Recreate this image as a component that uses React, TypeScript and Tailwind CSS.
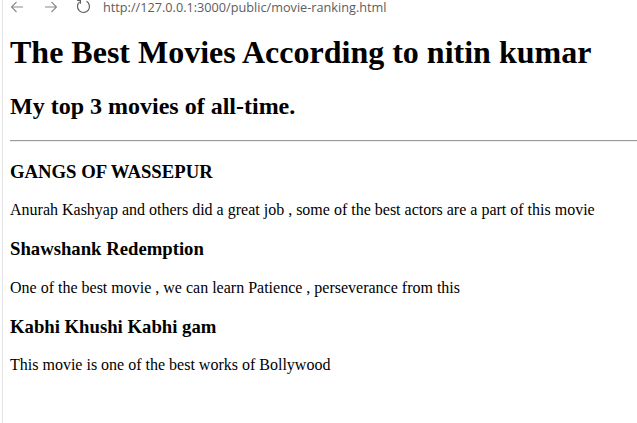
import React from "react";

const movies = [
  {
    title: "GANGS OF WASSEPUR",
    note: "Anurah Kashyap and others did a great job , some of the best actors are a part of this movie",
  },
  {
    title: "Shawshank Redemption",
    note: "One of the best movie , we can learn Patience , perseverance from this",
  },
  {
    title: "Kabhi Khushi Kabhi gam",
    note: "This movie is one of the best works of Bollywood",
  },
];

function BackIcon() {
  return (
    <svg width="14" height="12" viewBox="0 0 14 12" fill="none" stroke="#8a8a8a" strokeWidth="1.1">
      <path d="M13 6H1.5M6.5 1L1.5 6l5 5" />
    </svg>
  );
}

function ForwardIcon() {
  return (
    <svg width="14" height="12" viewBox="0 0 14 12" fill="none" stroke="#8a8a8a" strokeWidth="1.1">
      <path d="M1 6h11.5M7.5 1l5 5-5 5" />
    </svg>
  );
}

function ReloadIcon() {
  return (
    <svg width="15" height="15" viewBox="0 0 15 15" fill="none" stroke="#5f5f5f" strokeWidth="1.2">
      <path d="M10.5 2.3A6 6 0 1 1 3.6 2.9" />
      <path d="M1.2 1.5h3.2v3.2" />
    </svg>
  );
}

export default function App() {
  return (
    <div className="w-[637px] h-[423px] overflow-hidden bg-white flex">
      <div className="w-[3px] shrink-0 border-r border-[#e3e3e3]" />
      <div className="flex-1 flex flex-col">
        <div className="h-[13px] shrink-0 overflow-visible">
          <div className="flex items-center h-[14px] font-['Open_Sans',sans-serif] text-[12.7px] leading-[14px] text-[#5d5d5d]">
            <span className="ml-[7px]"><BackIcon /></span>
            <span className="ml-[20px]"><ForwardIcon /></span>
            <span className="ml-[18px] -mt-[2px]"><ReloadIcon /></span>
            <span className="ml-[12px]">http://127.0.0.1:3000/public/movie-ranking.html</span>
          </div>
        </div>
        <div className="pl-[7px] font-['Liberation_Serif',serif] text-black">
          <h1 className="text-[32px] font-bold leading-[1.15] mt-[21.44px] mb-[21.44px]">
            The Best Movies According to nitin kumar
          </h1>
          <h2 className="text-[24px] font-bold leading-[1.15] mb-[19.92px]">
            My top 3 movies of all-time.
          </h2>
          <hr className="border-t border-b border-t-[#9a9a9a] border-b-[#eeeeee] -mr-[20px] my-2" />
          {movies.map((m) => (
            <div key={m.title}>
              <h3 className="text-[18.72px] font-bold leading-[1.15] mt-[18.72px] mb-[18.72px]">
                {m.title}
              </h3>
              <p className="text-[16px] leading-[1.16]">{m.note}</p>
            </div>
          ))}
        </div>
      </div>
    </div>
  );
}
